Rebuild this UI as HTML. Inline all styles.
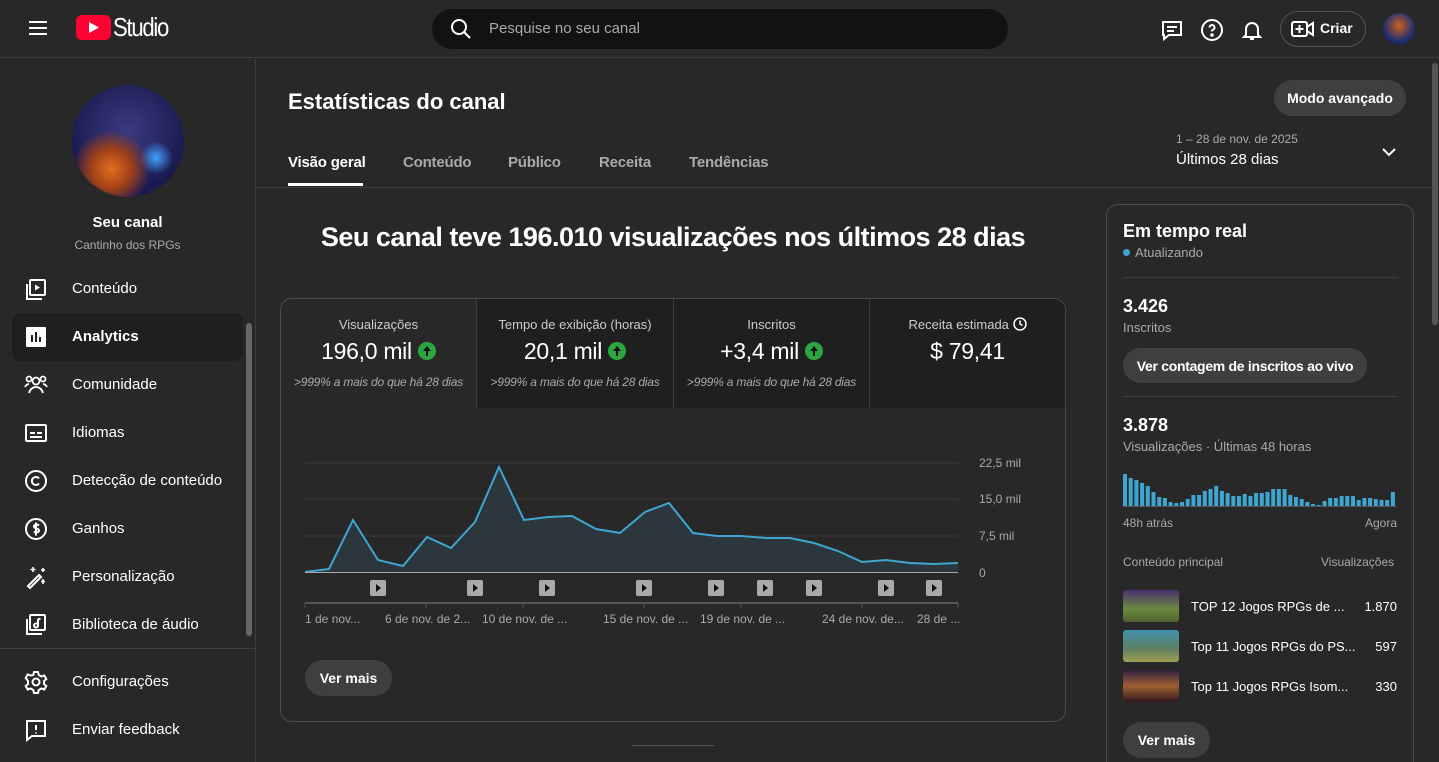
<!DOCTYPE html>
<html style="overflow:hidden"><head><meta charset="utf-8"><style>
*{margin:0;padding:0;box-sizing:border-box}
html,body{width:1439px;height:762px;overflow:hidden}
body{background:#282828;color:#fff;font-family:"Liberation Sans",sans-serif;position:relative}
.a{position:absolute;white-space:nowrap}
.nav{font-size:15px;color:#fff}
.ico{position:absolute;left:24px;width:24px;height:24px}
.g{color:#aaa}
.tab{font-size:15px;color:#aaa;font-weight:bold;letter-spacing:-.2px}
.btn{position:absolute;background:#3f3f3f;border-radius:18px;font-weight:bold;font-size:14px;display:flex;align-items:center;justify-content:center}
.mt{position:absolute;top:0;height:109px;text-align:center;border-right:1px solid #3e3e3e}
.mt .l{font-size:13px;color:#ccc;margin-top:18px}
.mt .v{font-size:23px;margin-top:6px;letter-spacing:-.3px}
.mt .s{font-size:12px;color:#aaa;font-style:italic;margin-top:10px;letter-spacing:-.2px}
.up{display:inline-block;width:18px;height:18px;border-radius:50%;background:#2ba640;vertical-align:middle;margin-left:6px;position:relative;top:-2px}
.up:after{content:"";position:absolute;left:5px;top:4px;border-left:4px solid transparent;border-right:4px solid transparent;border-bottom:5px solid #111}
.up:before{content:"";position:absolute;left:8px;top:8px;width:2px;height:6px;background:#111}
.pb{position:absolute;top:580px;width:16px;height:16px;background:#aaa;border-radius:2px}
.pb:after{content:"";position:absolute;left:6px;top:4px;border-top:4px solid transparent;border-bottom:4px solid transparent;border-left:5px solid #111}
.xl{position:absolute;top:612px;font-size:12px;color:#aaa}
</style></head><body>
<div class="a" style="left:0;top:0;width:1439px;height:58px;border-bottom:1px solid #3e3e3e"></div>
<svg class="a" style="left:28px;top:20px" width="20" height="16"><path d="M1 2h18M1 8h18M1 14h18" stroke="#fff" stroke-width="2"/></svg>
<svg class="a" style="left:76px;top:15px" width="35" height="25"><rect width="35" height="25" rx="6" fill="#ff0033"/><path d="M13 7l10 5.5-10 5.5z" fill="#fff"/></svg>
<div class="a" style="left:113px;top:12px;font-size:26px;letter-spacing:-1.5px;transform:scaleX(.85);transform-origin:left">Studio</div>
<div class="a" style="left:432px;top:9px;width:576px;height:40px;background:#121212;border-radius:20px"></div>
<svg class="a" style="left:449px;top:17px" width="24" height="24"><circle cx="10" cy="10" r="7" stroke="#fff" stroke-width="2" fill="none"/><path d="M15 15l6 6" stroke="#fff" stroke-width="2"/></svg>
<div class="a g" style="left:489px;top:20px;font-size:15px">Pesquise no seu canal</div>
<svg class="a" style="left:1160px;top:18px" width="24" height="24" fill="none" stroke="#fff" stroke-width="2"><path d="M3 4h18v13H9l-5 4v-4H3z"/><path d="M7 9h10M7 13h7"/></svg>
<svg class="a" style="left:1200px;top:18px" width="24" height="24" fill="none" stroke="#fff" stroke-width="2"><circle cx="12" cy="12" r="10"/><path d="M9.5 9.5a2.5 2.5 0 1 1 3 2.4c-.5.2-.5.6-.5 1.6"/><circle cx="12" cy="17" r=".8" fill="#fff"/></svg>
<svg class="a" style="left:1240px;top:18px" width="24" height="24" fill="none" stroke="#fff" stroke-width="2"><path d="M6 17V11a6 6 0 0 1 12 0v6l2 2H4z"/><path d="M10 21h4"/></svg>
<div class="a" style="left:1280px;top:11px;width:86px;height:36px;border:1px solid #555;border-radius:18px"></div>
<svg class="a" style="left:1291px;top:19px" width="24" height="20" fill="none" stroke="#fff" stroke-width="2"><rect x="1" y="3" width="15" height="14" rx="2"/><path d="M16 8l6-4v12l-6-4M8.5 6v8M4.5 10h8"/></svg>
<div class="a" style="left:1320px;top:20px;font-size:14px;font-weight:bold">Criar</div>
<div class="a" style="left:1383px;top:13px;width:32px;height:32px;border-radius:50%;background:radial-gradient(circle at 50% 40%,#d06020,#203070 60%,#101838)"></div>
<div class="a" style="left:255px;top:59px;width:1px;height:703px;background:#3e3e3e"></div>
<div class="a" style="left:72px;top:85px;width:112px;height:112px;border-radius:50%;background:radial-gradient(circle at 35% 75%,#e07020 0,#a04018 18%,transparent 35%),radial-gradient(circle at 75% 65%,#40a0ff 0,transparent 15%),radial-gradient(circle at 50% 40%,#3a3a80,#1a1a50 70%)"></div>
<div class="a" style="left:0;width:255px;top:214px;text-align:center;font-size:15px;font-weight:bold">Seu canal</div>
<div class="a g" style="left:0;width:255px;top:238px;text-align:center;font-size:12px">Cantinho dos RPGs</div>
<div class="a" style="left:246px;top:323px;width:6px;height:313px;background:#666;border-radius:3px"></div>
<div class="a" style="left:0;top:648px;width:255px;height:1px;background:#3e3e3e"></div>
<div class="a" style="left:12px;top:313px;width:231px;height:48px;background:#1f1f1f;border-radius:8px"></div>
<svg class="ico" style="top:278px" fill="none" stroke="#fff" stroke-width="2"><rect x="6" y="2" width="15" height="15" rx="1"/><path d="M3 6v15h15"/><path d="M11 6.5l5 3-5 3z" fill="#fff" stroke="none"/></svg>
<div class="a nav" style="left:72px;top:280px">Conteúdo</div>
<svg class="ico" style="top:325px"><rect x="2" y="2" width="20" height="20" rx="1" fill="#fff"/><path d="M8 10v7M12 7v10M16 12v5" stroke="#1f1f1f" stroke-width="2"/></svg>
<div class="a nav" style="left:72px;top:328px;font-weight:bold">Analytics</div>
<svg class="ico" style="top:372px" fill="none" stroke="#fff" stroke-width="1.8"><circle cx="12" cy="9" r="3.5"/><path d="M5 21c1-4 4-6 7-6s6 2 7 6"/><circle cx="5" cy="7" r="2.5"/><circle cx="19" cy="7" r="2.5"/><path d="M1 15c1-2 2-3 4-3M23 15c-1-2-2-3-4-3"/></svg>
<div class="a nav" style="left:72px;top:376px">Comunidade</div>
<svg class="ico" style="top:421px" fill="none" stroke="#fff" stroke-width="2"><rect x="2" y="4" width="20" height="16" rx="1"/><path d="M6 12h5M13 12h5M6 16h12"/></svg>
<div class="a nav" style="left:72px;top:424px">Idiomas</div>
<svg class="ico" style="top:469px" fill="none" stroke="#fff" stroke-width="2"><circle cx="12" cy="12" r="10"/><path d="M15 9.5a4 4 0 1 0 0 5"/></svg>
<div class="a nav" style="left:72px;top:472px">Detecção de conteúdo</div>
<svg class="ico" style="top:517px" fill="none" stroke="#fff" stroke-width="2"><circle cx="12" cy="12" r="10"/><path d="M15 8.5c-1-1-5-1.5-5 1s5 1.5 5 4-4 2-5 1M12 5.5v13"/></svg>
<div class="a nav" style="left:72px;top:520px">Ganhos</div>
<svg class="ico" style="top:565px" fill="none" stroke="#fff" stroke-width="2"><path d="M4 21l11-11 2 2L6 23z"/><path d="M9 2v5M6.5 4.5h5M19 3v4M17 5h4M19 14v5M17 16.5h4" stroke-width="1.6"/></svg>
<div class="a nav" style="left:72px;top:568px">Personalização</div>
<svg class="ico" style="top:613px" fill="none" stroke="#fff" stroke-width="2"><rect x="6" y="2" width="15" height="15" rx="1"/><path d="M3 6v15h15"/><path d="M14 6v6.5a2 2 0 1 1-1-1.7M14 6h2.5"/></svg>
<div class="a nav" style="left:72px;top:616px">Biblioteca de áudio</div>
<svg class="ico" style="top:670px" fill="none" stroke="#fff" stroke-width="2"><circle cx="12" cy="12" r="3.5"/><path d="M10 2h4l.7 3 2.6 1.5 3-1 2 3.5-2.3 2v3l2.3 2-2 3.5-3-1-2.6 1.5-.7 3h-4l-.7-3-2.6-1.5-3 1-2-3.5 2.3-2v-3L1.7 8l2-3.5 3 1L9.3 5z"/></svg>
<div class="a nav" style="left:72px;top:673px">Configurações</div>
<svg class="ico" style="top:718px" fill="none" stroke="#fff" stroke-width="2"><path d="M3 3h18v15H8l-5 4z"/><path d="M12 7v5M12 14.5v1"/></svg>
<div class="a nav" style="left:72px;top:721px">Enviar feedback</div>
<div class="a" style="left:288px;top:89px;font-size:22px;font-weight:bold">Estatísticas do canal</div>
<div class="btn" style="left:1274px;top:80px;width:132px;height:36px">Modo avançado</div>
<div class="a tab" style="left:288px;top:154px;color:#fff">Visão geral</div>
<div class="a" style="left:288px;top:183px;width:75px;height:3px;background:#fff"></div>
<div class="a tab" style="left:403px;top:154px">Conteúdo</div>
<div class="a tab" style="left:508px;top:154px">Público</div>
<div class="a tab" style="left:599px;top:154px">Receita</div>
<div class="a tab" style="left:689px;top:154px">Tendências</div>
<div class="a g" style="left:1176px;top:132px;font-size:12px">1 – 28 de nov. de 2025</div>
<div class="a" style="left:1176px;top:151px;font-size:15px">Últimos 28 dias</div>
<svg class="a" style="left:1380px;top:144px" width="18" height="16"><path d="M3 5l6 6 6-6" stroke="#fff" stroke-width="2" fill="none"/></svg>
<div class="a" style="left:256px;top:187px;width:1183px;height:1px;background:#3e3e3e"></div>
<div class="a" style="left:1432px;top:63px;width:6px;height:262px;background:#555;border-radius:3px"></div>
<div class="a" style="left:281px;width:784px;top:222px;text-align:center;font-size:27px;font-weight:bold;letter-spacing:-.5px">Seu canal teve 196.010 visualizações nos últimos 28 dias</div>
<div class="a" style="left:280px;top:298px;width:786px;height:424px;border:1px solid #4a4a4a;border-radius:12px;overflow:hidden">
 <div class="a" style="left:196px;top:0;width:588px;height:109px;background:#1f1f1f"></div>
 <div class="mt" style="left:0;width:196px"><div class="l">Visualizações</div><div class="v">196,0 mil<span class="up"></span></div><div class="s">&gt;999% a mais do que há 28 dias</div></div>
 <div class="mt" style="left:196px;width:197px"><div class="l">Tempo de exibição (horas)</div><div class="v">20,1 mil<span class="up"></span></div><div class="s">&gt;999% a mais do que há 28 dias</div></div>
 <div class="mt" style="left:393px;width:196px"><div class="l">Inscritos</div><div class="v">+3,4 mil<span class="up"></span></div><div class="s">&gt;999% a mais do que há 28 dias</div></div>
 <div class="mt" style="left:589px;width:195px;border:none"><div class="l">Receita estimada <svg width="14" height="14" style="vertical-align:-2px" fill="none" stroke="#fff" stroke-width="1.5"><circle cx="7" cy="7" r="6"/><path d="M7 3.5V7l2.5 1.5"/></svg></div><div class="v">$ 79,41</div></div>
</div>
<svg class="a" style="left:0;top:0" width="1439" height="762">
<g stroke="#3a3a3a"><path d="M305 463H958M305 499H958M305 536H958"/></g>
<path d="M305 572L329 569L353 520L378 560L403 566L427 537L451 548L475 522L499 467L524 520L548 517L572 516L596 529L620 533L645 512L669 503L693 533L717 536L741 536L766 538L790 538L814 543L838 551L862 562L886 560L910 563L934 564L958 563V572H305Z" fill="#2b363d"/>
<path d="M305 572L329 569L353 520L378 560L403 566L427 537L451 548L475 522L499 467L524 520L548 517L572 516L596 529L620 533L645 512L669 503L693 533L717 536L741 536L766 538L790 538L814 543L838 551L862 562L886 560L910 563L934 564L958 563" fill="none" stroke="#3ea6d0" stroke-width="2"/>
<path d="M305 572.5H958" stroke="#aaa"/>
<path d="M305 603H958" stroke="#555" stroke-width="2"/>
<g stroke="#555"><path d="M305 603v5M426 603v5M523 603v5M644 603v5M741 603v5M862 603v5M958 603v5"/></g>
<g font-size="12" fill="#aaa" font-family="Liberation Sans"><text x="979" y="467">22,5 mil</text><text x="979" y="503">15,0 mil</text><text x="979" y="540">7,5 mil</text><text x="979" y="577">0</text></g>
</svg>
<div class="pb" style="left:370px"></div><div class="pb" style="left:467px"></div><div class="pb" style="left:539px"></div><div class="pb" style="left:636px"></div><div class="pb" style="left:708px"></div><div class="pb" style="left:757px"></div><div class="pb" style="left:806px"></div><div class="pb" style="left:878px"></div><div class="pb" style="left:926px"></div>
<div class="xl" style="left:305px">1 de nov...</div><div class="xl" style="left:385px">6 de nov. de 2...</div><div class="xl" style="left:482px">10 de nov. de ...</div><div class="xl" style="left:603px">15 de nov. de ...</div><div class="xl" style="left:700px">19 de nov. de ...</div><div class="xl" style="left:822px">24 de nov. de...</div><div class="xl" style="left:917px">28 de ...</div>
<div class="btn" style="left:305px;top:660px;width:87px;height:36px">Ver mais</div>
<div class="a" style="left:632px;top:745px;width:82px;height:1px;background:#555"></div>
<div class="a" style="left:1106px;top:204px;width:308px;height:570px;border:1px solid #4a4a4a;border-radius:12px"></div>
<div class="a" style="left:1123px;top:221px;font-size:18px;font-weight:bold">Em tempo real</div>
<div class="a" style="left:1123px;top:249px;width:7px;height:7px;border-radius:50%;background:#3ea6d0"></div>
<div class="a g" style="left:1135px;top:245px;font-size:13px">Atualizando</div>
<div class="a" style="left:1123px;top:277px;width:275px;height:1px;background:#3e3e3e"></div>
<div class="a" style="left:1123px;top:296px;font-size:18px;font-weight:bold">3.426</div>
<div class="a g" style="left:1123px;top:320px;font-size:13px">Inscritos</div>
<div class="btn" style="left:1123px;top:348px;width:244px;height:35px;letter-spacing:-.3px">Ver contagem de inscritos ao vivo</div>
<div class="a" style="left:1123px;top:396px;width:275px;height:1px;background:#3e3e3e"></div>
<div class="a" style="left:1123px;top:415px;font-size:18px;font-weight:bold">3.878</div>
<div class="a g" style="left:1123px;top:439px;font-size:13px">Visualizações · Últimas 48 horas</div>
<svg class="a" style="left:1123px;top:470px" width="276" height="40"><g fill="#3ea6d0">
<rect x="0" y="4" width="4" height="32"/><rect x="5.7" y="8" width="4" height="28"/><rect x="11.4" y="10" width="4" height="26"/><rect x="17.1" y="13" width="4" height="23"/><rect x="22.8" y="16" width="4" height="20"/><rect x="28.5" y="22" width="4" height="14"/><rect x="34.2" y="27" width="4" height="9"/><rect x="39.9" y="28" width="4" height="8"/><rect x="45.6" y="32" width="4" height="4"/><rect x="51.3" y="33" width="4" height="3"/><rect x="57" y="32" width="4" height="4"/><rect x="62.7" y="29" width="4" height="7"/><rect x="68.4" y="25" width="4" height="11"/><rect x="74.1" y="25" width="4" height="11"/><rect x="79.8" y="21" width="4" height="15"/><rect x="85.5" y="19" width="4" height="17"/><rect x="91.2" y="16" width="4" height="20"/><rect x="96.9" y="21" width="4" height="15"/><rect x="102.6" y="23" width="4" height="13"/><rect x="108.3" y="26" width="4" height="10"/><rect x="114" y="26" width="4" height="10"/><rect x="119.7" y="24" width="4" height="12"/><rect x="125.4" y="26" width="4" height="10"/><rect x="131.1" y="23" width="4" height="13"/><rect x="136.8" y="23" width="4" height="13"/><rect x="142.5" y="22" width="4" height="14"/><rect x="148.2" y="19" width="4" height="17"/><rect x="153.9" y="19" width="4" height="17"/><rect x="159.6" y="19" width="4" height="17"/><rect x="165.3" y="25" width="4" height="11"/><rect x="171" y="27" width="4" height="9"/><rect x="176.7" y="29" width="4" height="7"/><rect x="182.4" y="32" width="4" height="4"/><rect x="188.1" y="34" width="4" height="2"/><rect x="193.8" y="35" width="4" height="1"/><rect x="199.5" y="31" width="4" height="5"/><rect x="205.2" y="28" width="4" height="8"/><rect x="210.9" y="28" width="4" height="8"/><rect x="216.6" y="26" width="4" height="10"/><rect x="222.3" y="26" width="4" height="10"/><rect x="228" y="26" width="4" height="10"/><rect x="233.7" y="30" width="4" height="6"/><rect x="239.4" y="28" width="4" height="8"/><rect x="245.1" y="28" width="4" height="8"/><rect x="250.8" y="29" width="4" height="7"/><rect x="256.5" y="30" width="4" height="6"/><rect x="262.2" y="30" width="4" height="6"/><rect x="267.9" y="22" width="4" height="14"/>
</g><path d="M0 36.5H274" stroke="#555"/></svg>
<div class="a g" style="left:1123px;top:516px;font-size:12px">48h atrás</div>
<div class="a g" style="left:1365px;top:516px;font-size:12px">Agora</div>
<div class="a g" style="left:1123px;top:555px;font-size:12px">Conteúdo principal</div>
<div class="a g" style="left:1321px;top:555px;font-size:12px">Visualizações</div>
<div class="a" style="left:1123px;top:590px;width:56px;height:32px;border-radius:3px;background:linear-gradient(#4a3070,#6a8a40 60%,#506030)"></div>
<div class="a" style="left:1123px;top:630px;width:56px;height:32px;border-radius:3px;background:linear-gradient(#4090b0,#608060 60%,#a0a050)"></div>
<div class="a" style="left:1123px;top:670px;width:56px;height:32px;border-radius:3px;background:linear-gradient(#302040,#a06030 50%,#301820)"></div>
<div class="a" style="left:1191px;top:599px;font-size:13px">TOP 12 Jogos RPGs de ...</div><div class="a" style="left:1337px;top:599px;font-size:13px;width:60px;text-align:right">1.870</div>
<div class="a" style="left:1191px;top:639px;font-size:13px">Top 11 Jogos RPGs do PS...</div><div class="a" style="left:1337px;top:639px;font-size:13px;width:60px;text-align:right">597</div>
<div class="a" style="left:1191px;top:679px;font-size:13px">Top 11 Jogos RPGs Isom...</div><div class="a" style="left:1337px;top:679px;font-size:13px;width:60px;text-align:right">330</div>
<div class="btn" style="left:1123px;top:722px;width:87px;height:36px">Ver mais</div>
</body></html>
